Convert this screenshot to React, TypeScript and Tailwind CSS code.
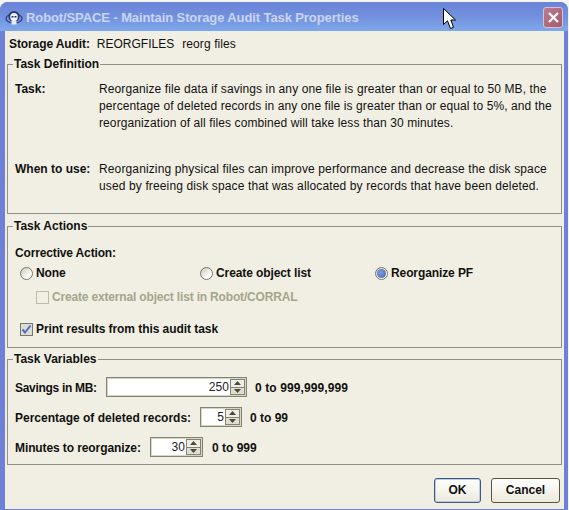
const sans = "font-['Liberation_Sans',Arial,sans-serif]";

function TitleIcon() {
  return (
    <svg width="18" height="16" viewBox="0 0 18 16" className="shrink-0">
      <ellipse cx="9" cy="8.5" rx="8" ry="4.5" fill="none" stroke="#2b3f78" strokeWidth="1.2" />
      <circle cx="9" cy="6.5" r="5.5" fill="#26366e" />
      <ellipse cx="9" cy="7" rx="3.8" ry="4" fill="#f2f5fb" />
      <rect x="6.5" y="10.5" width="5" height="4" fill="#e6ebf7" />
      <rect x="6.5" y="6" width="2" height="1.6" fill="#26366e" />
      <rect x="9.5" y="6" width="2" height="1.6" fill="#26366e" />
    </svg>
  );
}

function CloseButton() {
  return (
    <div className="flex h-[21px] w-[20px] items-center justify-center rounded-[3px] border border-[#d4c2d4] bg-[linear-gradient(135deg,#bb7d90,#a45a6c)]">
      <svg width="13" height="13" viewBox="0 0 13 13">
        <path d="M2 2 L11 11 M11 2 L2 11" stroke="#fff" strokeWidth="2.2" />
      </svg>
    </div>
  );
}

function Cursor() {
  return (
    <svg width="13" height="22" viewBox="0 0 13 22" className="absolute left-[443px] top-[8px]">
      <path
        d="M0.5 0.5 V16.5 L4.5 12.8 L7.5 20.5 L10.5 19.3 L7.8 12 H12.5 Z"
        fill="#fff"
        stroke="#000"
        strokeWidth="1"
      />
    </svg>
  );
}

function Radio({ checked }: { checked?: boolean }) {
  return (
    <span className="flex h-[13px] w-[13px] shrink-0 items-center justify-center rounded-full border border-[#77776a] bg-[linear-gradient(135deg,#c9c9c0,#ffffff_75%)]">
      {checked && (
        <span className="h-[9px] w-[9px] rounded-full bg-[radial-gradient(circle_at_40%_40%,#7f9fe0,#3f5fa8)]" />
      )}
    </span>
  );
}

function SpinArrow({ down }: { down?: boolean }) {
  return (
    <svg width="7" height="4" viewBox="0 0 7 4">
      <path d={down ? "M0 0 H7 L3.5 4 Z" : "M3.5 0 L7 4 H0 Z"} fill="#4a4a3c" />
    </svg>
  );
}

function Spinner({ value, width }: { value: string; width: string }) {
  return (
    <div className={`flex h-[20px] items-stretch border border-[#85856f] bg-[#d6d4c4] p-[1px] ${width}`}>
      <div className="flex flex-1 items-center justify-end bg-white pr-[1px] font-normal tracking-[0.1px] text-[#222]">
        {value}
      </div>
      <div className="flex w-[15px] flex-col bg-[#85856f]">
        <div className="mx-[1px] mt-[1px] flex flex-1 items-center justify-center bg-[#efeee6]">
          <SpinArrow />
        </div>
        <div className="mx-[1px] my-[1px] flex flex-1 items-center justify-center bg-[#e0ded2]">
          <SpinArrow down />
        </div>
      </div>
    </div>
  );
}

function Group({ title, className, children }: { title: string; className: string; children: React.ReactNode }) {
  return (
    <fieldset className={`border border-[#909088] px-[7px] ${className}`}>
      <legend className="ml-[-2px] px-[1px] text-[12px] leading-[14px] font-bold text-[#111]">{title}</legend>
      {children}
    </fieldset>
  );
}

export default function App() {
  return (
    <div className={`relative h-[510px] w-[569px] overflow-hidden bg-[#f4f4f2] pt-[2px] text-[12px] leading-[17px] text-[#111] ${sans}`}>
      <div className="flex h-[508px] w-[568px] flex-col overflow-hidden rounded-t-[8px] bg-[#6f80d8]">
        <div className="flex h-[29px] shrink-0 items-center bg-[linear-gradient(#6a84d8,#7390de_50%,#7ea9ea)] pl-[5px] pr-[5px] pt-[2px]">
          <TitleIcon />
          <span className="ml-[3px] text-[13px] font-bold tracking-[-0.1px] text-[#c9d6f4]">
            Robot/SPACE - Maintain Storage Audit Task Properties
          </span>
          <div className="ml-auto">
            <CloseButton />
          </div>
        </div>

        <div className="mb-[1px] ml-[5px] mr-[4px] flex flex-1 flex-col bg-[#f1efe3] px-[2px]">
          <div className="flex h-[26px] items-center pl-[2px] pt-[1px]">
            <span className="font-bold tracking-[-0.1px]">Storage Audit:</span>
            <span className="ml-[7px]">REORGFILES</span>
            <span className="ml-[8px] tracking-[0.1px]">reorg files</span>
          </div>

          <Group title="Task Definition" className="h-[157px]">
            <div className="flex pt-[10px]">
              <span className="w-[84px] shrink-0 font-bold">Task:</span>
              <p className="whitespace-nowrap tracking-[0.1px]">
                Reorganize file data if savings in any one file is greater than or equal to 50 MB, the
                <br />
                percentage of deleted records in any one file is greater than or equal to 5%, and the
                <br />
                reorganization of all files combined will take less than 30 minutes.
              </p>
            </div>
            <div className="mt-[29px] flex">
              <span className="w-[84px] shrink-0 font-bold">When to use:</span>
              <p className="whitespace-nowrap tracking-[0.13px]">
                Reorganizing physical files can improve performance and decrease the disk space
                <br />
                used by freeing disk space that was allocated by records that have been deleted.
              </p>
            </div>
          </Group>

          <Group title="Task Actions" className="mt-[5px] h-[129px]">
            <div className="pt-[12px] font-bold tracking-[-0.15px]">Corrective Action:</div>
            <div className="mt-[3px] flex h-[17px] items-center pl-[5px] font-bold tracking-[-0.1px]">
              <div className="flex w-[180px] items-center gap-[3px]">
                <Radio />
                None
              </div>
              <div className="flex w-[175px] items-center gap-[3px]">
                <Radio />
                Create object list
              </div>
              <div className="flex items-center gap-[3px]">
                <Radio checked />
                Reorganize PF
              </div>
            </div>
            <div className="mt-[7px] flex h-[17px] items-center gap-[3px] pl-[21px] font-bold tracking-[-0.17px] text-[#a5a58c]">
              <span className="h-[13px] w-[13px] border border-[#bdbca8] bg-[#f1efe3]" />
              Create external object list in Robot/CORRAL
            </div>
            <div className="mt-[15px] flex h-[17px] items-center gap-[3px] pl-[5px] font-bold tracking-[-0.06px]">
              <span className="flex h-[13px] w-[13px] items-center justify-center border border-[#77776a] bg-[#dcdcd4]">
                <svg width="11" height="11" viewBox="0 0 11 11">
                  <path d="M1.5 5.5 L4 8.5 L9.5 1.5" fill="none" stroke="#4a6fc0" strokeWidth="2" />
                </svg>
              </span>
              Print results from this audit task
            </div>
          </Group>

          <Group title="Task Variables" className="mt-[4px] h-[113px] font-bold">
            <div className="mt-[11px] flex h-[20px] items-center">
              <span className="w-[91px] pt-[2px] tracking-[-0.3px]">Savings in MB:</span>
              <Spinner value="250" width="w-[141px]" />
              <span className="ml-[8px] pt-[2px] tracking-[0.1px]">0 to 999,999,999</span>
            </div>
            <div className="mt-[10px] flex h-[20px] items-center">
              <span className="w-[185px] pt-[2px]">Percentage of deleted records:</span>
              <Spinner value="5" width="w-[42px]" />
              <span className="ml-[8px] pt-[2px]">0 to 99</span>
            </div>
            <div className="mt-[10px] flex h-[20px] items-center">
              <span className="w-[135px] pt-[2px] tracking-[-0.1px]">Minutes to reorganize:</span>
              <Spinner value="30" width="w-[53px]" />
              <span className="ml-[9px] pt-[2px]">0 to 999</span>
            </div>
          </Group>

          <div className="mt-[13px] flex justify-end gap-[10px] pr-[2px] font-bold">
            <button className="h-[25px] w-[47px] rounded-[3px] border border-[#3c5a78] bg-[linear-gradient(#ffffff,#ece9dc)] shadow-[inset_0_0_0_1px_#b8cce8] font-bold">
              OK
            </button>
            <button className="h-[25px] w-[69px] rounded-[3px] border border-[#55553f] bg-[linear-gradient(#ffffff,#ece9dc)] font-bold">
              Cancel
            </button>
          </div>
        </div>
      </div>
      <Cursor />
    </div>
  );
}
